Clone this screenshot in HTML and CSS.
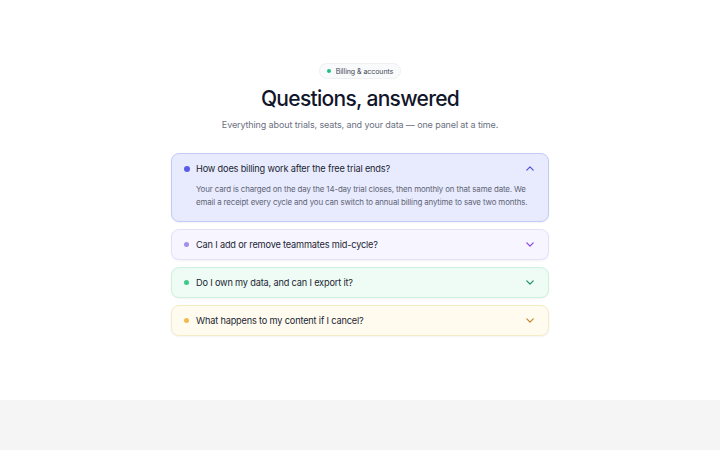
FILE: index.html
```html
<!DOCTYPE html>
<html lang="en">
  <head>
    <meta charset="UTF-8" />
    <meta name="viewport" content="width=device-width, initial-scale=1.0" />
    <title>FAQ</title>
    <link rel="stylesheet" href="styles.css">
  </head>

  <body>
    <section class="faq">
      <span class="tag"><span class="tag-dot"></span>Billing &amp; accounts</span>
      <h1 class="faq-title">Questions, answered</h1>
      <p class="faq-lead">Everything about trials, seats, and your data — one panel at a time.</p>

      <div class="panels">
        <div class="panel panel-indigo open">
          <div class="panel-head">
            <span class="dot"></span>
            <span class="question">How does billing work after the free trial ends?</span>
            <svg class="chev" viewBox="0 0 10 6" width="8" height="5"><path d="M1 5 L5 1 L9 5" /></svg>
          </div>
          <p class="answer">Your card is charged on the day the 14-day trial closes, then monthly on that same date. We email a receipt every cycle and you can switch to annual billing anytime to save two months.</p>
        </div>

        <div class="panel panel-violet">
          <div class="panel-head">
            <span class="dot"></span>
            <span class="question">Can I add or remove teammates mid-cycle?</span>
            <svg class="chev" viewBox="0 0 10 6" width="8" height="5"><path d="M1 1 L5 5 L9 1" /></svg>
          </div>
        </div>

        <div class="panel panel-green">
          <div class="panel-head">
            <span class="dot"></span>
            <span class="question">Do I own my data, and can I export it?</span>
            <svg class="chev" viewBox="0 0 10 6" width="8" height="5"><path d="M1 1 L5 5 L9 1" /></svg>
          </div>
        </div>

        <div class="panel panel-amber">
          <div class="panel-head">
            <span class="dot"></span>
            <span class="question">What happens to my content if I cancel?</span>
            <svg class="chev" viewBox="0 0 10 6" width="8" height="5"><path d="M1 1 L5 5 L9 1" /></svg>
          </div>
        </div>
      </div>
    </section>
    <footer class="below"></footer>
  </body>
</html>
```

FILE: styles.css
```css
body {
  margin: 0;
  font-family: Inter, "Noto Sans", sans-serif;
  background: #f5f5f5;
}

.faq {
  height: 400px;
  box-sizing: border-box;
  padding-top: 63px;
  background: #fff;
  display: flex;
  flex-direction: column;
  align-items: center;
}

.tag {
  display: inline-flex;
  align-items: center;
  gap: 5px;
  height: 14px;
  padding: 0 7px;
  border: 1px solid #eef0f2;
  border-radius: 999px;
  background: #f9fafb;
  font-size: 7px;
  letter-spacing: -0.05px;
  color: #3f4654;
}

.tag-dot {
  width: 4px;
  height: 4px;
  border-radius: 50%;
  background: #1fbf84;
}

.faq-title {
  margin: 6px 0 0;
  font-size: 21px;
  font-weight: 500;
  letter-spacing: -0.7px;
  color: #12162a;
  line-height: 28px;
}

.faq-lead {
  margin: 5px 0 0;
  font-size: 9px;
  letter-spacing: -0.12px;
  color: #6b7180;
  line-height: 14px;
}

.panels {
  margin-top: 21px;
  width: 378px;
  display: flex;
  flex-direction: column;
  gap: 7px;
}

.panel {
  border: 1px solid;
  border-radius: 8px;
  box-shadow: 0 1px 2px rgba(20, 20, 50, 0.05);
}

.panel-head {
  display: flex;
  align-items: center;
  height: 29px;
  padding: 0 14px 0 12px;
}

.dot {
  width: 5px;
  height: 5px;
  border-radius: 50%;
  margin-right: 7px;
}

.question {
  flex: 1;
  font-size: 9.2px;
  letter-spacing: -0.17px;
  color: #1b1f33;
}

.chev {
  fill: none;
  stroke-width: 1.5;
  stroke-linecap: round;
  stroke-linejoin: round;
}

.answer {
  margin: 0;
  padding: 0 14px 12px 24px;
  font-size: 7.9px;
  letter-spacing: -0.13px;
  line-height: 13px;
  color: #5d6375;
}

.panel-indigo { background: #e8ebfd; border-color: #c3caf6; }
.panel-indigo .dot { background: #5b5bea; width: 6px; height: 6px; margin-right: 6px; }
.panel-indigo .chev { stroke: #4f52d8; }

.panel-violet { background: #f7f5ff; border-color: #e5e0f7; }
.panel-violet .dot { background: #a58cf0; }
.panel-violet .chev { stroke: #8447e0; }

.panel-green { background: #eefcf5; border-color: #cdf1de; }
.panel-green .dot { background: #3ec98a; }
.panel-green .chev { stroke: #1d8c5d; }

.panel-amber { background: #fffbee; border-color: #f6ebc8; }
.panel-amber .dot { background: #f3b94f; }
.panel-amber .chev { stroke: #c9822a; }

.below {
  height: 50px;
  background: #f5f5f5;
}
```
